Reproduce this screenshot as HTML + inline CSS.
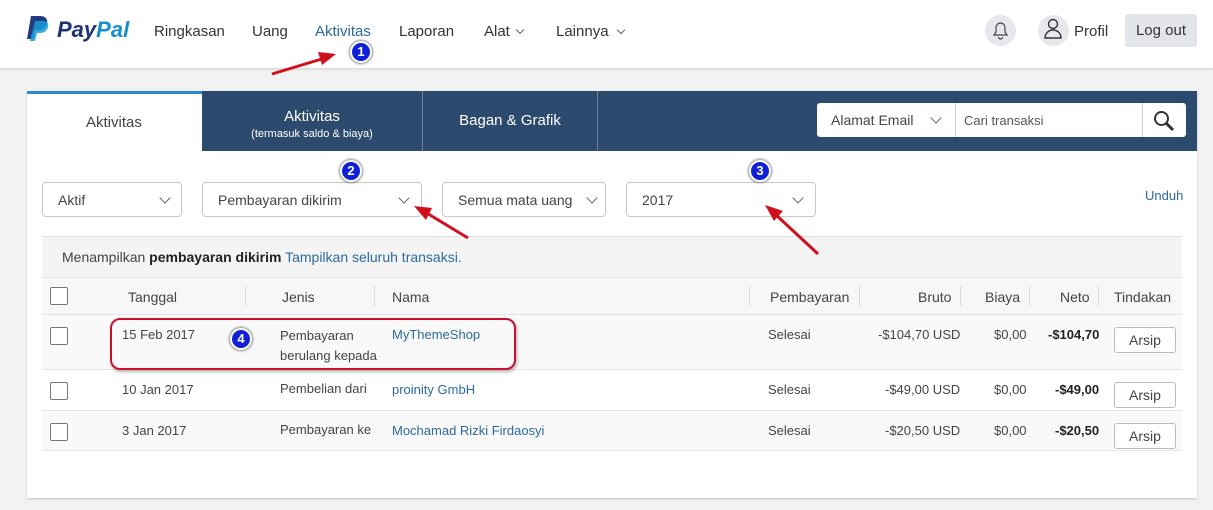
<!DOCTYPE html>
<html><head><meta charset="utf-8"><style>
*{box-sizing:border-box;margin:0;padding:0}
body{width:1213px;height:510px;background:#f2f2f2;font-family:"Liberation Sans",Arial,sans-serif;color:#333;position:relative;overflow:hidden}
.a{position:absolute;white-space:nowrap}
#hdr{position:absolute;left:0;top:0;width:1213px;height:68px;background:#fff;box-shadow:0 1px 3px rgba(0,0,0,.15)}
.nav{font-size:15px;color:#333;top:23px}
.card{position:absolute;left:27px;top:91px;width:1170px;height:407px;background:#fff;box-shadow:0 1px 2px rgba(0,0,0,.2)}
.dd{position:absolute;top:182px;height:35px;border:1px solid #c8c8c8;border-radius:4px;background:#fff;font-size:14px;padding:9px 15px;color:#444}
.chev{position:absolute;width:8px;height:8px;border-right:1px solid #666;border-bottom:1px solid #666;transform:rotate(45deg)}
.sc{width:6px;height:6px}
.cb{position:absolute;left:50px;width:18px;height:18px;border:1px solid #777;border-radius:2px;background:#fff}
.t{font-size:14px;color:#444}
.lnk{color:#2c6aa0}
.btn{position:absolute;left:1114px;width:62px;height:26px;border:1px solid #bbb;border-radius:3px;background:#fff;font-size:14px;text-align:center;line-height:24px;color:#444}
.sep{position:absolute;top:286px;width:1px;height:20px;background:#ddd}
.num{position:absolute;width:22px;height:22px;border-radius:50%;background:#1020d8;border:2px solid #fff;box-shadow:0 0 2px 1px #888;color:#fff;font-weight:bold;font-size:13px;text-align:center;line-height:18px}
</style></head><body>
<div id="hdr"></div>
<svg class="a" style="left:26px;top:16px" width="24" height="26" viewBox="0 0 24 26"><path d="M5 0h9c5 0 8 3 7 7-1 5-5 7-9 7H9l-2 9H1z" fill="#253b80"/><path d="M9 5h8c4 0 6 2 5 6-1 4-4 6-8 6h-3l-2 8H4z" fill="#179bd7" opacity=".85"/></svg>
<div class="a" style="left:57px;top:17px;font-size:22px;font-weight:bold;font-style:italic;color:#1f3573">Pay<span style="color:#1690cc">Pal</span></div>
<div class="a nav" style="left:154px">Ringkasan</div>
<div class="a nav" style="left:252px">Uang</div>
<div class="a nav" style="left:315px;color:#2c6aa0">Aktivitas</div>
<div class="a nav" style="left:399px">Laporan</div>
<div class="a nav" style="left:484px">Alat</div><div class="chev sc" style="left:517px;top:27px"></div>
<div class="a nav" style="left:556px">Lainnya</div><div class="chev sc" style="left:618px;top:27px"></div>
<div class="a" style="left:985px;top:15px;width:31px;height:31px;border-radius:50%;background:#e6e8eb"></div>
<svg class="a" style="left:992px;top:21px" width="17" height="19" viewBox="0 0 17 19"><path d="M8.5 2c-3 0-4.5 2.5-4.5 5v4l-2 3h13l-2-3V7c0-2.5-1.5-5-4.5-5zM6.5 16a2 2 0 0 0 4 0" fill="none" stroke="#444" stroke-width="1.2"/></svg>
<div class="a" style="left:1038px;top:15px;width:31px;height:31px;border-radius:50%;background:#e6e8eb"></div>
<svg class="a" style="left:1043px;top:18px" width="20" height="22" viewBox="0 0 20 22"><circle cx="10" cy="6" r="4.5" fill="none" stroke="#333" stroke-width="1.4"/><path d="M2 20c0-5 4-8 8-8s8 3 8 8z" fill="none" stroke="#333" stroke-width="1.4"/></svg>
<div class="a" style="left:1074px;top:23px;font-size:15px">Profil</div>
<div class="a" style="left:1125px;top:14px;width:72px;height:33px;background:#e2e5e9;border-radius:3px;font-size:15px;text-align:center;line-height:33px">Log out</div>

<div class="card"></div>
<div class="a" style="left:27px;top:91px;width:1170px;height:60px;background:#2c4a6e"></div>
<div class="a" style="left:27px;top:91px;width:175px;height:60px;background:#fff;border-top:3px solid #2c8ad0"></div>
<div class="a t" style="left:86px;top:114px;font-size:15px">Aktivitas</div>
<div class="a" style="left:202px;top:108px;width:220px;text-align:center;color:#fff;font-size:15px">Aktivitas</div>
<div class="a" style="left:202px;top:128px;width:220px;text-align:center;color:#fff;font-size:11px">(termasuk saldo &amp; biaya)</div>
<div class="a" style="left:422px;top:91px;width:1px;height:60px;background:#6b819c"></div>
<div class="a" style="left:597px;top:91px;width:1px;height:60px;background:#6b819c"></div>
<div class="a" style="left:423px;top:112px;width:174px;text-align:center;color:#fff;font-size:15px">Bagan &amp; Grafik</div>
<div class="a" style="left:817px;top:103px;width:369px;height:34px;background:#fff;border-radius:3px"></div>
<div class="a t" style="left:831px;top:112px">Alamat Email</div><div class="chev" style="left:932px;top:114px"></div>
<div class="a" style="left:955px;top:103px;width:1px;height:34px;background:#ccc"></div>
<div class="a" style="left:964px;top:113px;font-size:13px;color:#555">Cari transaksi</div>
<div class="a" style="left:1142px;top:103px;width:1px;height:34px;background:#ccc"></div>
<svg class="a" style="left:1153px;top:110px" width="22" height="22" viewBox="0 0 22 22"><circle cx="8.5" cy="8.5" r="6.5" fill="none" stroke="#333" stroke-width="2"/><path d="M13 13l7 7" stroke="#333" stroke-width="3"/></svg>

<div class="dd" style="left:42px;width:140px">Aktif<div class="chev" style="left:118px;top:11px"></div></div>
<div class="dd" style="left:202px;width:220px">Pembayaran dikirim<div class="chev" style="left:197px;top:11px"></div></div>
<div class="dd" style="left:442px;width:164px">Semua mata uang<div class="chev" style="left:145px;top:11px"></div></div>
<div class="dd" style="left:626px;width:190px">2017<div class="chev" style="left:167px;top:11px"></div></div>
<div class="a lnk" style="left:1145px;top:188px;font-size:13px">Unduh</div>

<div class="a" style="left:42px;top:236px;width:1140px;height:41px;background:#f4f4f4;border-top:1px solid #e0e0e0"></div>
<div class="a t" style="left:62px;top:249px">Menampilkan <b style="color:#222">pembayaran dikirim</b> <span class="lnk">Tampilkan seluruh transaksi.</span></div>
<div class="a" style="left:42px;top:277px;width:1140px;height:38px;background:#f7f7f7;border-top:1px solid #e3e3e3;border-bottom:1px solid #e3e3e3"></div>
<div class="a" style="left:42px;top:315px;width:1140px;height:55px;background:#f9f9f9;border-bottom:1px solid #e6e6e6"></div>
<div class="a" style="left:42px;top:370px;width:1140px;height:41px;background:#fff;border-bottom:1px solid #e6e6e6"></div>
<div class="a" style="left:42px;top:411px;width:1140px;height:40px;background:#f9f9f9;border-bottom:1px solid #e6e6e6"></div>
<div class="cb" style="top:287px"></div><div class="cb" style="top:327px"></div><div class="cb" style="top:382px"></div><div class="cb" style="top:423px"></div>
<div class="sep" style="left:245px"></div><div class="sep" style="left:374px"></div><div class="sep" style="left:749px"></div><div class="sep" style="left:859px"></div><div class="sep" style="left:960px"></div><div class="sep" style="left:1029px"></div><div class="sep" style="left:1098px"></div>
<div class="a t" style="left:128px;top:289px">Tanggal</div>
<div class="a t" style="left:282px;top:289px">Jenis</div>
<div class="a t" style="left:392px;top:289px">Nama</div>
<div class="a t" style="left:770px;top:289px">Pembayaran</div>
<div class="a t" style="left:918px;top:289px">Bruto</div>
<div class="a t" style="left:985px;top:289px">Biaya</div>
<div class="a t" style="left:1060px;top:289px">Neto</div>
<div class="a t" style="left:1114px;top:289px">Tindakan</div>

<div class="a t" style="left:122px;top:327px;font-size:13px">15 Feb 2017</div>
<div class="a t" style="left:280px;top:326px;font-size:13px;line-height:20px">Pembayaran<br>berulang kepada</div>
<div class="a t lnk" style="left:392px;top:327px;font-size:13px">MyThemeShop</div>
<div class="a t" style="left:768px;top:327px;font-size:13px">Selesai</div>
<div class="a t" style="left:878px;top:327px;font-size:13px">-$104,70 USD</div>
<div class="a t" style="left:994px;top:327px;font-size:13px">$0,00</div>
<div class="a t" style="left:1048px;top:327px;font-size:13px;font-weight:bold;color:#222">-$104,70</div>
<div class="btn" style="top:327px">Arsip</div>

<div class="a t" style="left:122px;top:382px;font-size:13px">10 Jan 2017</div>
<div class="a t" style="left:280px;top:381px;font-size:13px">Pembelian dari</div>
<div class="a t lnk" style="left:392px;top:382px;font-size:13px">proinity GmbH</div>
<div class="a t" style="left:768px;top:382px;font-size:13px">Selesai</div>
<div class="a t" style="left:885px;top:382px;font-size:13px">-$49,00 USD</div>
<div class="a t" style="left:994px;top:382px;font-size:13px">$0,00</div>
<div class="a t" style="left:1055px;top:382px;font-size:13px;font-weight:bold;color:#222">-$49,00</div>
<div class="btn" style="top:382px">Arsip</div>

<div class="a t" style="left:122px;top:423px;font-size:13px">3 Jan 2017</div>
<div class="a t" style="left:280px;top:422px;font-size:13px">Pembayaran ke</div>
<div class="a t lnk" style="left:392px;top:423px;font-size:13px">Mochamad Rizki Firdaosyi</div>
<div class="a t" style="left:768px;top:423px;font-size:13px">Selesai</div>
<div class="a t" style="left:885px;top:423px;font-size:13px">-$20,50 USD</div>
<div class="a t" style="left:994px;top:423px;font-size:13px">$0,00</div>
<div class="a t" style="left:1055px;top:423px;font-size:13px;font-weight:bold;color:#222">-$20,50</div>
<div class="btn" style="top:423px">Arsip</div>

<div class="a" style="left:110px;top:318px;width:406px;height:52px;border:2px solid #c8102e;border-radius:10px;box-shadow:1px 2px 3px rgba(0,0,0,.3)"></div>
<div class="num" style="left:350px;top:41px">1</div>
<div class="num" style="left:340px;top:160px">2</div>
<div class="num" style="left:749px;top:160px">3</div>
<div class="num" style="left:230px;top:328px">4</div>
<svg class="a" style="left:0;top:0" width="1213" height="510">
<g stroke="#d0101a" stroke-width="3" fill="#d0101a">
<line x1="272" y1="74" x2="325" y2="58"/><polygon points="336,54 318,52 322,65" stroke="none"/>
<line x1="468" y1="238" x2="425" y2="212"/><polygon points="414,206 426,220 432,208" stroke="none"/>
<line x1="818" y1="254" x2="775" y2="214"/><polygon points="765,205 774,221 783,211" stroke="none"/>
</g></svg>
</body></html>
